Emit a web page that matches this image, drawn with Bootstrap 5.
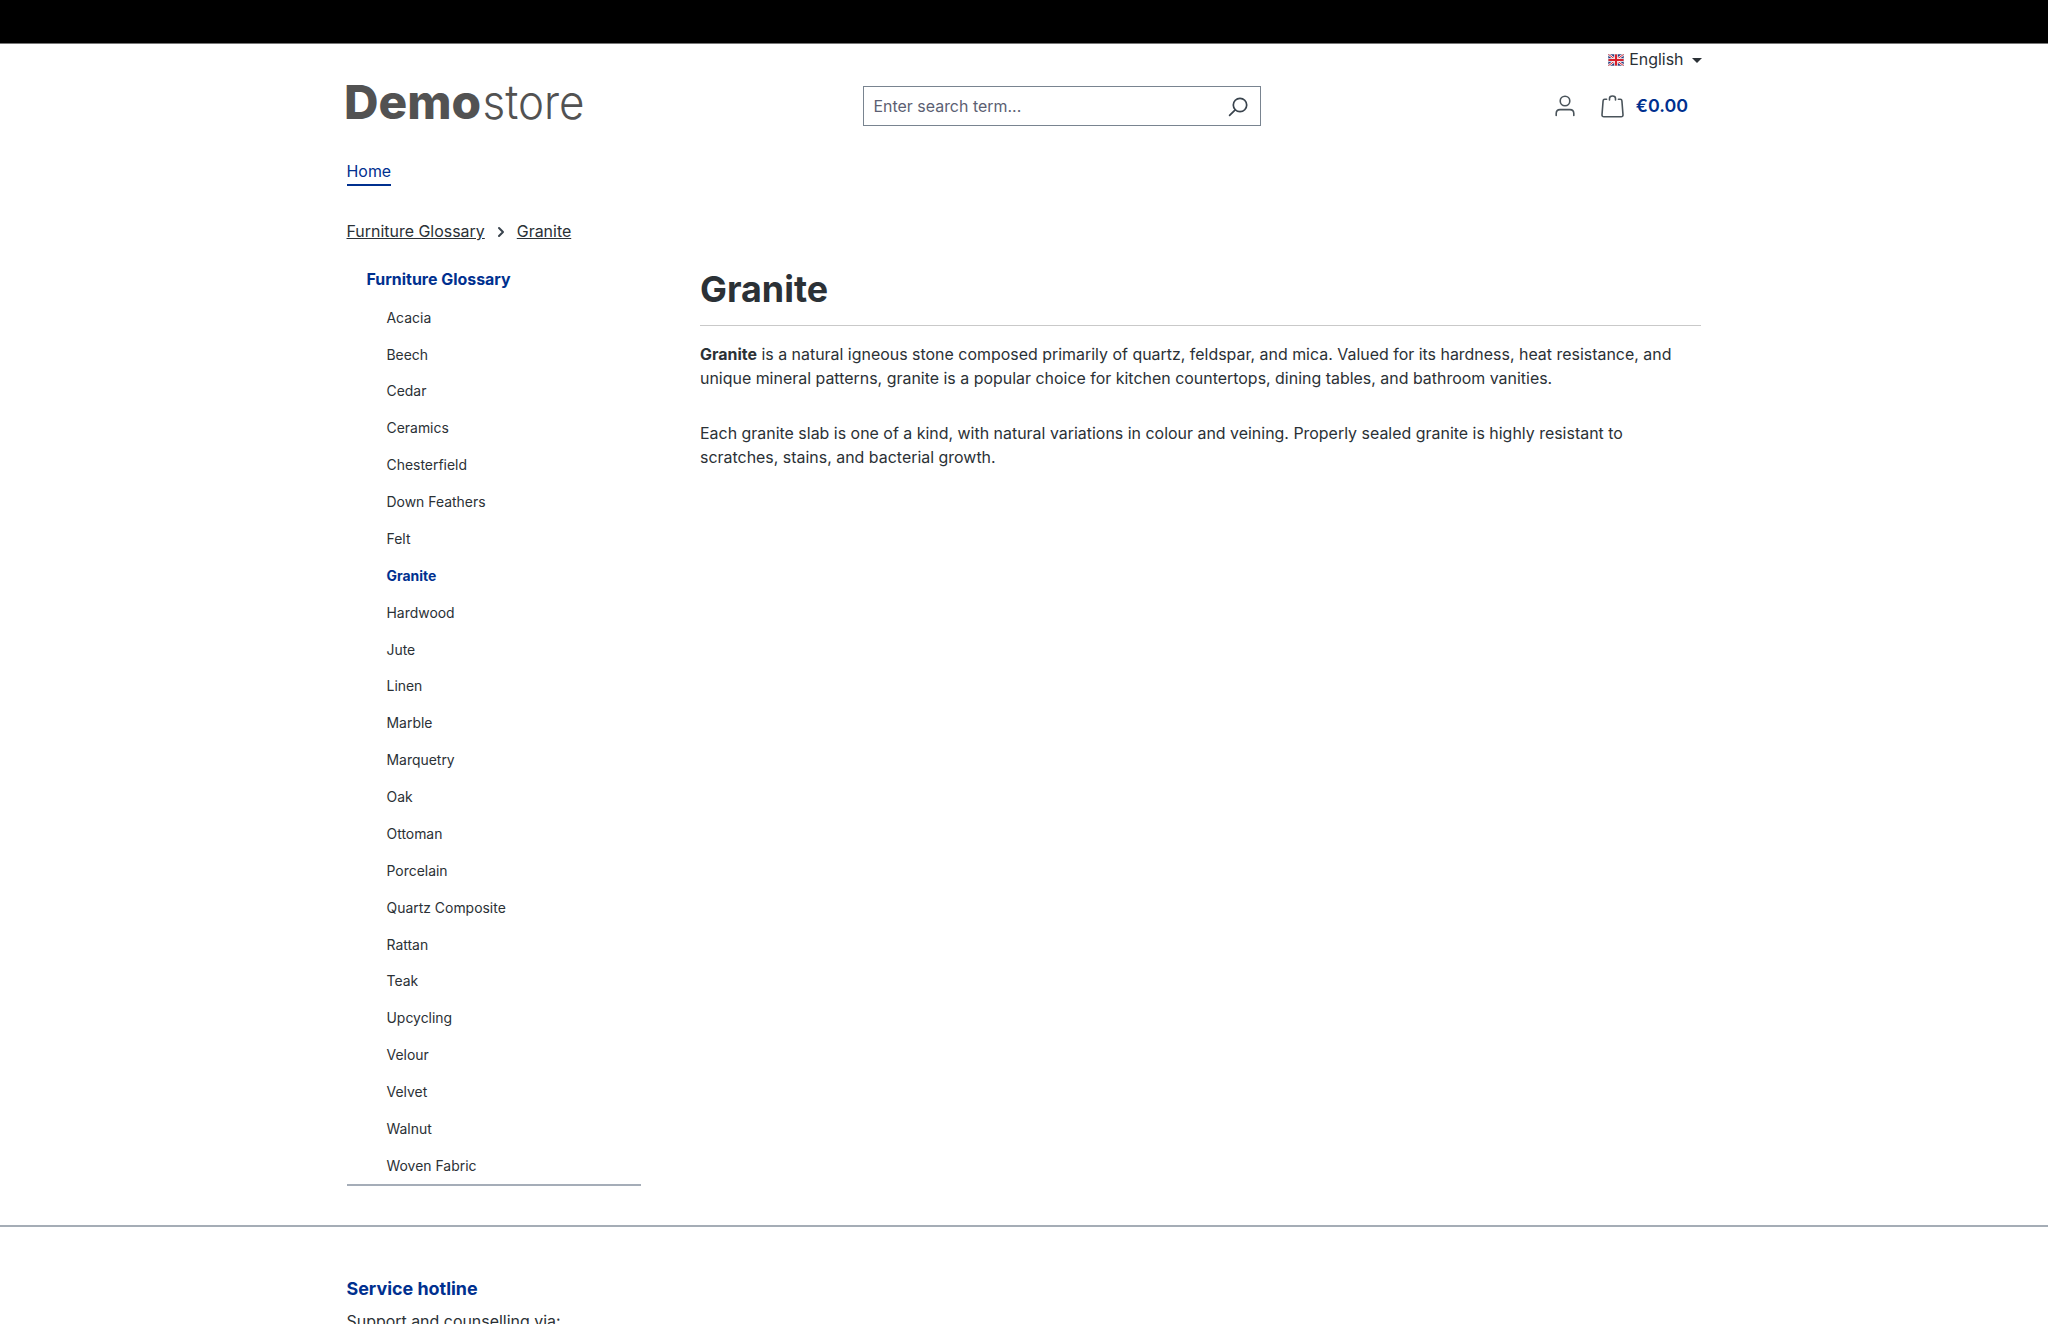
<!DOCTYPE html>
<html lang="en">
<head>
<meta charset="utf-8">
<meta name="viewport" content="width=device-width, initial-scale=1">
<title>Granite</title>
<link href="https://cdn.jsdelivr.net/npm/bootstrap@5.3.0/dist/css/bootstrap.min.css" rel="stylesheet">
<style>
html{overflow:hidden}
body{font-family:Inter,"Liberation Sans",sans-serif;font-size:15.94px;line-height:23.9px;color:#2b3136;height:1324px;overflow:hidden}
a{color:inherit;text-decoration:none}
.brand-blue{color:#00308f}
.top-strip{height:44px;background:#000;border-bottom:1px solid #777}
.shop-wrap{width:1355px;margin-left:346.5px}
.lang-bar{height:32px}
.caret{border-top:5px solid #2b3136;border-left:5px solid transparent;border-right:5px solid transparent;margin-left:8px}
.flag{margin-right:5px}
.header-row{height:60px}
.logo{width:260px;height:60px;margin-left:-5px;overflow:visible}
.logo text{fill:#525252;font-size:47.3px}
.search-box{width:398.5px;height:40px;border:1px solid #798490;border-radius:0;margin-left:261px;padding:1px 12.5px 0 10px;color:#5c5f73}
.search-box input{font-size:15.94px;color:#5c5f73;outline:0}
.search-box input::placeholder{color:#5c5f73;opacity:1}
.actions{padding:0 13.5px 0 0}
.bag{margin-left:26px}
.total{font-size:17.9px;font-weight:600;margin-left:11.5px}
.nav-home{margin-top:23px;height:27px;padding-top:1px;border-bottom:2px solid #00308f}
.crumbs{margin-top:34px;height:24px}
.crumbs a{text-decoration:underline}
.chev{margin:0 12px}
.side{width:294px;border-bottom:2px solid #a5adb8;height:918px}
.side-title{font-weight:700;padding-left:20px;height:31.2px}
.side-list a{display:block;height:36.88px;padding:7.5px 0 0 40px;font-size:13.95px;line-height:22px}
.main{margin-left:59.5px;width:1001px}
.main h1{font-size:35.86px;font-weight:700;line-height:43px;margin:0 0 14px}
.rule{height:1px;background:#c9c9c9;margin-bottom:16.6px}
.main p{margin-bottom:32px}
.foot{margin-top:39px;border-top:2px solid #a5adb6;padding-top:48.6px}
.foot-title{font-size:17.9px;font-weight:700;line-height:26px}
</style>
<script src="https://cdn.jsdelivr.net/npm/bootstrap@5.3.0/dist/js/bootstrap.bundle.min.js"></script>
</head>
<body>
<div class="top-strip"></div>
<header class="shop-wrap">
  <div class="lang-bar d-flex align-items-center justify-content-end">
    <svg class="flag" width="16" height="12" viewBox="0 0 16 12"><rect width="16" height="12" fill="#263b80"/><path d="M0 0L16 12M16 0L0 12" stroke="#fff" stroke-width="2.4"/><path d="M0 0L16 12M16 0L0 12" stroke="#d8202c" stroke-width="1"/><path d="M8 0V12M0 6H16" stroke="#fff" stroke-width="3.6"/><path d="M8 0V12M0 6H16" stroke="#d8202c" stroke-width="2.2"/><rect x=".5" y=".5" width="15" height="11" fill="none" stroke="#bcc1cd" stroke-opacity=".45"/></svg>
    <span>English</span><span class="caret"></span>
  </div>
  <div class="header-row d-flex align-items-center">
    <svg class="logo" viewBox="0 0 260 60"><text x="2" y="42.6" font-weight="800" textLength="137" lengthAdjust="spacingAndGlyphs">Demo</text><text x="140.5" y="42.6" font-weight="300" textLength="102" lengthAdjust="spacingAndGlyphs">store</text></svg>
    <form class="search-box d-flex align-items-center">
      <input class="border-0 bg-transparent p-0 flex-grow-1" type="text" placeholder="Enter search term...">
      <svg width="20" height="20" viewBox="0 0 20 20" fill="none" stroke="#39434d" stroke-width="1.7" stroke-linecap="round"><circle cx="12" cy="8" r="6.7"/><path d="M7.2 12.8L1.6 18.4"/></svg>
    </form>
    <div class="actions d-flex align-items-center ms-auto">
      <svg width="20" height="22" viewBox="0 0 20 22" fill="none" stroke="#4a545b" stroke-width="1.6" stroke-linecap="round"><circle cx="10" cy="6" r="4.8"/><path d="M1.2 20.5V18.5Q1.2 14.6 5 14.6H15Q18.8 14.6 18.8 18.5V20.5"/></svg>
      <svg class="bag" width="23" height="24" viewBox="0 0 23 24" fill="none" stroke="#4a545b" stroke-width="1.6" stroke-linecap="round"><path d="M5.6 5.3H3.7Q2.2 5.3 2.1 6.8L1 20.8Q.9 22.8 2.9 22.8H20.1Q22.1 22.8 22 20.8L20.9 6.8Q20.8 5.3 19.3 5.3H17.4M8.5 6V4.4Q8.5 2 11.5 2Q14.5 2 14.5 4.4V6"/></svg>
      <span class="total brand-blue">€0.00</span>
    </div>
  </div>
  <nav class="d-flex"><a class="nav-home brand-blue" href="#">Home</a></nav>
  <nav class="crumbs d-flex align-items-center"><a href="#">Furniture Glossary</a>
    <svg class="chev" width="8" height="12" viewBox="0 0 8 12" fill="none" stroke="#39434d" stroke-width="2" stroke-linecap="round" stroke-linejoin="round"><path d="M2 2L6 6L2 10"/></svg><a href="#">Granite</a></nav>
</header>
<main class="shop-wrap d-flex pt-4">
  <aside class="side">
    <div class="side-title brand-blue">Furniture Glossary</div>
    <nav class="side-list">
      <a href="#">Acacia</a><a href="#">Beech</a><a href="#">Cedar</a><a href="#">Ceramics</a><a href="#">Chesterfield</a><a href="#">Down Feathers</a><a href="#">Felt</a><a href="#" class="brand-blue fw-bold">Granite</a><a href="#">Hardwood</a><a href="#">Jute</a><a href="#">Linen</a><a href="#">Marble</a><a href="#">Marquetry</a><a href="#">Oak</a><a href="#">Ottoman</a><a href="#">Porcelain</a><a href="#">Quartz Composite</a><a href="#">Rattan</a><a href="#">Teak</a><a href="#">Upcycling</a><a href="#">Velour</a><a href="#">Velvet</a><a href="#">Walnut</a><a href="#">Woven Fabric</a>
    </nav>
  </aside>
  <section class="main">
    <h1>Granite</h1>
    <div class="rule"></div>
    <p><strong>Granite</strong> is a natural igneous stone composed primarily of quartz, feldspar, and mica. Valued for its hardness, heat resistance, and unique mineral patterns, granite is a popular choice for kitchen countertops, dining tables, and bathroom vanities.</p>
    <p>Each granite slab is one of a kind, with natural variations in colour and veining. Properly sealed granite is highly resistant to scratches, stains, and bacterial growth.</p>
  </section>
</main>
<footer class="foot"><div class="shop-wrap">
  <div class="foot-title brand-blue">Service hotline</div>
  <div class="mt-2">Support and counselling via:</div>
</div></footer>
</body>
</html>
